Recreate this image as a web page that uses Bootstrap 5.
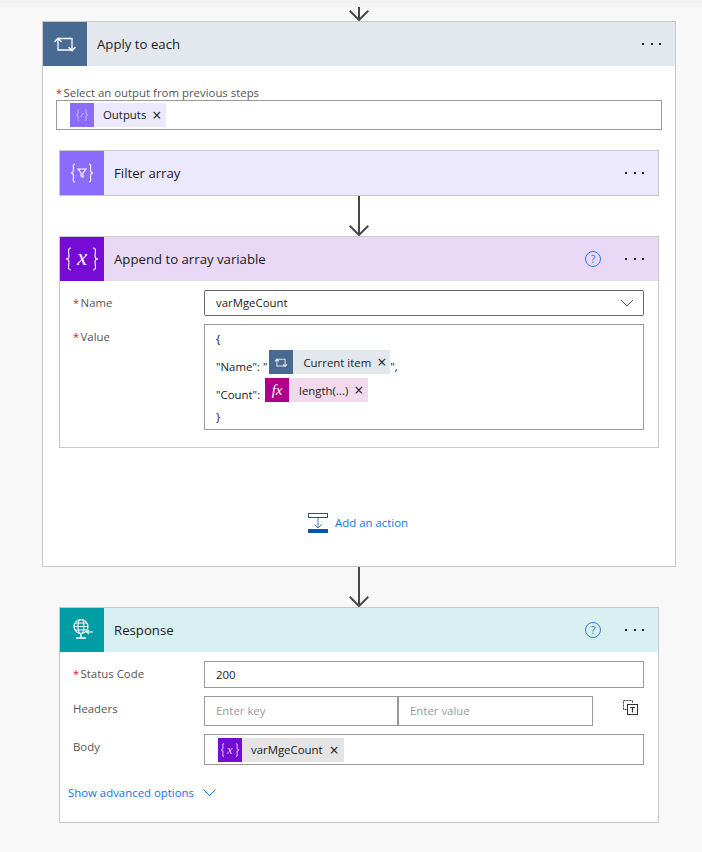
<!doctype html>
<html lang="en"><head><meta charset="utf-8"><title>Flow</title>
<link href="https://cdn.jsdelivr.net/npm/bootstrap@5.3.0/dist/css/bootstrap.min.css" rel="stylesheet">
<style>
html,body{height:852px;overflow:hidden}
body{background:#f8f8f8;font-family:"Open Sans","Noto Sans",sans-serif;font-size:12px;color:#333;line-height:16px}
.topstrip{height:7px;background:#f3f3f3}
.canvas{padding-left:42px;width:676px}
.arrowwrap{display:flex;justify-content:center;line-height:0}
.fcard{border:1px solid #c8c8c8;background:#fff;border-radius:0}
.fhead{height:44px;display:flex;align-items:center}
.ficon{width:44px;height:44px;flex:none;display:flex;align-items:center;justify-content:center}
.ficon svg{overflow:visible}
.ftitle{font-size:13.2px;color:#1b1a19;margin-left:10px;flex:1}
.dots{display:flex;gap:6.4px;margin-right:14px;margin-left:24px}
.dots i{display:block;width:2px;height:2px;background:#222}
.helpq{width:16px;height:16px;border:1.4px solid #2b7de9;border-radius:50%;color:#2b7de9;font-size:11px;line-height:13px;text-align:center;flex:none}
.hd-apply{background:#e3e8ef}.ic-apply{background:#486991}
.hd-filter{background:#ece8fd}.ic-filter{background:#8c6cff}
.hd-append{background:#ead9f6}.ic-append{background:#770bd6}
.hd-resp{background:#d8f0f2}.ic-resp{background:#009da5}
.inner{margin:0 16px;width:600px}
.inner-out{margin:0 0 0 17px;width:600px}
.req{color:#e81123;margin-right:1.500px;font-size:11px}
.sel-label{padding:20px 0 0 13px;height:34px;line-height:14px;font-size:11.4px;color:#555}
.tbox{border:1px solid #999;background:#fff;display:flex;align-items:center}
.sel-box{margin:0 13px;height:30px;padding-left:13px}
.chip{display:inline-flex;align-items:center;height:24px;color:#1b1a19;font-size:11.4px;line-height:24px;white-space:nowrap}
.chipic{width:24px;height:24px;display:flex;align-items:center;justify-content:center;flex:none;margin-right:9px}
.chipx{font-size:16px;margin:0 4px 0 6px;color:#222}
.chtx{margin:2px 0 0 1px;line-height:22px}
.chipnudge{margin-left:2px}
.chipwide{padding-right:1px}
.chipwide2{padding-right:1px}
.chipwide2 .chipx{margin-left:7px}
.frow{display:flex;margin:0 14px 8px 0}
.flabel{width:144px;flex:none;padding:5px 0 0 13px;color:#555;font-size:11.4px;line-height:16px}
.fval{flex:1;font-size:11.4px;color:#1b1a19;padding-left:11px;min-width:0}
.name-box{height:26px;border-color:#666;border-radius:2px;justify-content:space-between;padding-right:9px}
.value-box{height:106px;display:block;border:1px solid #999;background:#fff;padding-top:3px}
.vline{display:flex;align-items:flex-end;height:22px;line-height:16px;padding-bottom:3px}
.vline.chipline{height:24px;padding-bottom:0;margin-bottom:4px;align-items:flex-start}
.vline.chipline .vt{padding-top:9px;line-height:15px}
.addrow{display:flex;justify-content:center;align-items:center;gap:7px;margin-top:65px;padding:0 2px 33px 0;height:53px;font-size:11.4px;color:#1274e4;line-height:20px}
.addrow svg{flex:none}
.pair{flex:1;display:flex}
.ph{color:#9a9a9a;font-size:11.4px}
.pairbox{width:194px;height:30px;padding-left:11px}
.pairbox+.pairbox{width:196px;border-left:2px solid #999;margin-left:-1px;padding-left:11px}
.copyic{margin:4px 20px 0 0}
.adv{padding:20px 0 0 8px;color:#1274e4;font-size:11.4px;height:57px;display:flex;align-items:flex-start;gap:9px;line-height:16px}
.adv svg{margin-top:4px}
</style></head>
<body>
<div class="topstrip"></div>
<div class="canvas">
  <div class="arrowwrap"><svg width="20" height="14" viewBox="0 0 20 14"><path d="M10 0V13M.7 3.700 10 13l9.300-9.300" fill="none" stroke="#484848" stroke-width="2"/></svg></div>
  <div class="fcard card">
    <div class="fhead hd-apply">
      <div class="ficon ic-apply"><svg width="24" height="18" viewBox="0 0 24 18" fill="none" stroke="#fff" stroke-width="1.300"><path d="M5 3.500V15H19V3.500H5"/><path d="M1.500 7 5 3.200 8.500 7M15.500 12 19 15.800 22.500 12"/></svg></div>
      <div class="ftitle">Apply to each</div>
      <div class="dots"><i></i><i></i><i></i></div>
    </div>
    <div class="sel-label"><span class="req">*</span>Select an output from previous steps</div>
    <div class="tbox sel-box">
      <span class="chip hd-filter"><span class="chipic ic-filter"><svg width="14" height="14" viewBox="0 0 14 14" fill="none" stroke="#cbbcff" stroke-width="1"><path d="M4 1.500C2.500 1.500 3 3 3 5S1.500 7 1.500 7 3 7 3 9 2.500 12.500 4 12.500M10 1.500c1.500 0 1 1.500 1 3.500s1.500 2 1.500 2S11 7 11 9s.5 3.500-1 3.500M5.500 9 8.500 5"/></svg></span>Outputs<span class="chipx">×</span></span>
    </div>
    <div class="inner">
      <div class="fcard" style="margin-top:20px">
        <div class="fhead hd-filter">
          <div class="ficon ic-filter"><svg width="24" height="22" viewBox="0 0 24 22" fill="none" stroke="#fff" stroke-width="1.300"><path d="M5 2C2.500 2 3.500 5.500 3.500 8S1 11 1 11s2.500 0 2.500 3-1 6 1.500 6M19 2c2.500 0 1.500 3.500 1.500 6s2.500 3 2.500 3-2.500 0-2.500 3 1 6-1.500 6M8 7h8l-3 4v4l-2-1v-3z" stroke-width="1.100"/></svg></div>
          <div class="ftitle">Filter array</div>
          <div class="dots"><i></i><i></i><i></i></div>
        </div>
      </div>
      <div class="arrowwrap"><svg width="20" height="40" viewBox="0 0 20 40"><path d="M10 0V39M.7 29.700 10 39l9.300-9.300" fill="none" stroke="#484848" stroke-width="2"/></svg></div>
      <div class="fcard">
        <div class="fhead hd-append">
          <div class="ficon ic-append"><svg width="36" height="30" viewBox="0 0 36 30" fill="none" stroke="#fff" stroke-width="1.100"><path d="M7 4C3 4 5 9 5 12S2 15 2 15s3 0 3 3-2 8 2 8M29 4c4 0 2 5 2 8s3 3 3 3-3 0-3 3 2 8-2 8"/><text x="18" y="21" text-anchor="middle" fill="#fff" stroke="none" font-family="Liberation Serif" font-style="italic" font-size="23">x</text></svg></div>
          <div class="ftitle">Append to array variable</div>
          <div class="helpq">?</div>
          <div class="dots"><i></i><i></i><i></i></div>
        </div>
        <div class="frow" style="margin-top:9px">
          <div class="flabel"><span class="req">*</span>Name</div>
          <div class="tbox fval name-box"><span>varMgeCount</span><svg width="14" height="8" viewBox="0 0 14 8" fill="none" stroke="#555"><path d="M1 1l6 6 6-6"/></svg></div>
        </div>
        <div class="frow" style="margin-bottom:17px">
          <div class="flabel"><span class="req">*</span>Value</div>
          <div class="fval value-box">
            <div class="vline">{</div>
            <div class="vline chipline"><span class="vt">"Name": "</span><span class="chip hd-apply chipnudge"><span class="chipic ic-apply"><svg width="14" height="11" viewBox="0 0 24 18" fill="none" stroke="#dfe6ef" stroke-width="1.800"><path d="M5 3.500V15H19V3.500H5M1.500 7 5 3.200 8.500 7M15.500 12 19 15.800 22.500 12"/></svg></span><span class="chtx">Current item</span><span class="chipx">×</span></span><span class="vt">",</span></div>
            <div class="vline chipline"><span class="vt">"Count":&nbsp;</span><span class="chip chipnudge chipwide" style="background:#f2d9ec"><span class="chipic" style="background:#ae008b;color:#fff;font:italic 15px 'Liberation Serif',serif">fx</span><span class="chtx">length(...)</span><span class="chipx">×</span></span></div>
            <div class="vline">}</div>
          </div>
        </div>
      </div>
    </div>
    <div class="addrow"><svg width="20" height="20" viewBox="0 0 20 20" fill="none"><rect x=".5" y=".5" width="19" height="4" stroke="#0a5aa8"/><path d="M10 5V15M6.500 11.500 10 15l3.500-3.500" stroke="#3d7fc0"/><rect y="16" width="20" height="4" fill="#0058a8"/></svg><span>Add an action</span></div>
  </div>
  <div class="inner-out">
    <div class="arrowwrap"><svg width="20" height="40" viewBox="0 0 20 40"><path d="M10 0V39M.7 29.700 10 39l9.300-9.300" fill="none" stroke="#484848" stroke-width="2"/></svg></div>
    <div class="fcard">
      <div class="fhead hd-resp">
        <div class="ficon ic-resp"><svg width="26" height="26" viewBox="0 0 26 26" fill="none" stroke="#fff" stroke-width="1.100"><circle cx="12" cy="9.500" r="7"/><ellipse cx="12" cy="9.500" rx="3" ry="7"/><path d="M5 9.500h14M6 6h12M6 13h12"/><path d="M12 16.500V21M7 21h10" stroke-width="1.500"/><path d="M24 15H17.500M20 13 17.500 15l2.500 2"/></svg></div>
        <div class="ftitle">Response</div>
        <div class="helpq">?</div>
        <div class="dots"><i></i><i></i><i></i></div>
      </div>
      <div class="frow" style="margin-top:9px">
        <div class="flabel"><span class="req">*</span>Status Code</div>
        <div class="tbox fval" style="height:27px">200</div>
      </div>
      <div class="frow me-0">
        <div class="flabel">Headers</div>
        <div class="pair"><div class="tbox pairbox ph">Enter key</div><div class="tbox pairbox ph">Enter value</div>
          <svg class="ms-auto copyic" width="15" height="15" viewBox="0 0 15 15" fill="none" stroke="#333"><path d="M3.500 9.500h-3v-9h9v3" stroke-dasharray="2 1"/><rect x="4.500" y="4.500" width="10" height="10"/><path d="M7 7.500h5M9.500 7.500v5" stroke-width="1.200"/></svg>
        </div>
      </div>
      <div class="frow mb-0">
        <div class="flabel">Body</div>
        <div class="tbox fval" style="height:31px;padding-left:13px"><span class="chip chipwide2" style="background:#e4e4e4"><span class="chipic ic-append"><svg width="20" height="16" viewBox="0 0 20 16" fill="none" stroke="#e5ccff"><path d="M4 1.500C2 1.500 3 4 3 6S1 8 1 8s2 0 2 2-1 4.500 1 4.500M16 1.500c2 0 1 2.500 1 4.500s2 2 2 2-2 0-2 2 1 4.500-1 4.500"/><text x="10" y="12" text-anchor="middle" fill="#e5ccff" stroke="none" font-family="Liberation Serif" font-style="italic" font-size="12">x</text></svg></span>varMgeCount<span class="chipx">×</span></span></div>
      </div>
      <div class="adv"><span>Show advanced options</span><svg width="13" height="7" viewBox="0 0 13 7" fill="none" stroke="#1274e4"><path d="M.5.500l6 6 6-6"/></svg></div>
    </div>
  </div>
</div>
<script src="https://cdn.jsdelivr.net/npm/bootstrap@5.3.0/dist/js/bootstrap.bundle.min.js"></script>
</body></html>
